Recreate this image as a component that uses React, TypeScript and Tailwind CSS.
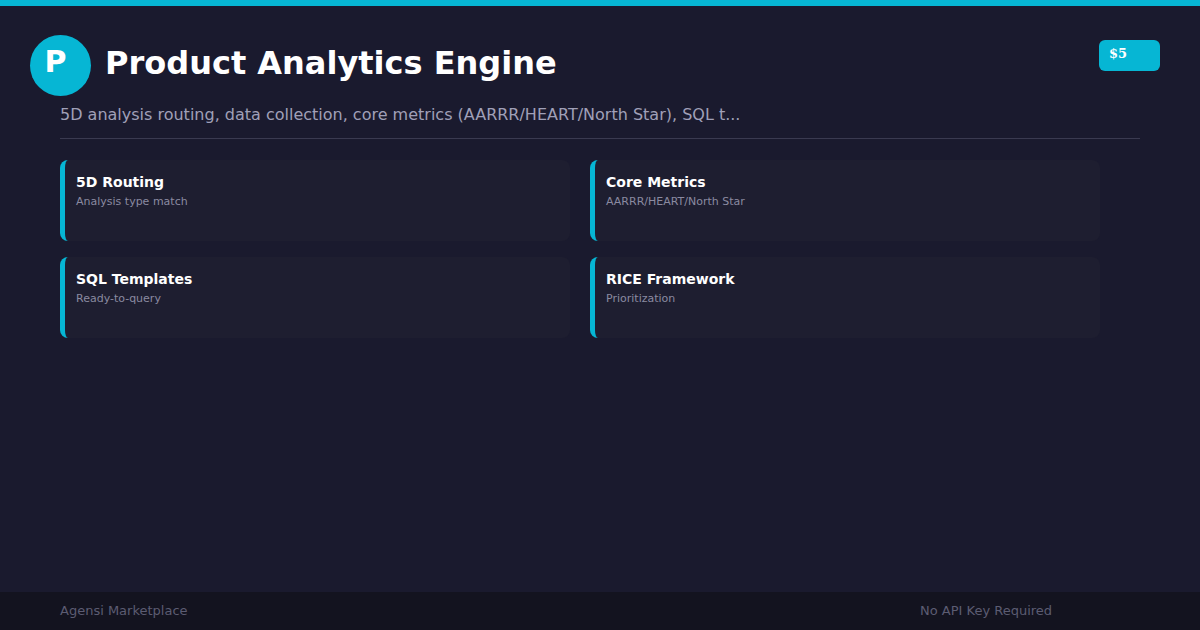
const cards = [
  { title: "5D Routing", sub: "Analysis type match" },
  { title: "Core Metrics", sub: "AARRR/HEART/North Star" },
  { title: "SQL Templates", sub: "Ready-to-query" },
  { title: "RICE Framework", sub: "Prioritization" },
];

export default function App() {
  return (
    <div
      className="w-[1200px] h-[630px] bg-[#1a1a2e] flex flex-col overflow-hidden"
      style={{ fontFamily: '"DejaVu Sans", sans-serif' }}
    >
      <div className="h-[6px] bg-[#06b6d4]" />
      <div className="flex-1 flex flex-col">
        <div className="flex items-start pl-[30px] pt-[29px] pr-[40px]">
          <div className="w-[61px] h-[61px] rounded-full bg-[#06b6d4] flex items-center justify-center text-white text-[30px] font-bold pr-[10px] pb-[8px]">
            P
          </div>
          <div className="ml-[14px] mt-[8px] text-white text-[32px] font-bold leading-[40px]">
            Product Analytics Engine
          </div>
          <div className="ml-auto mt-[5px] w-[61px] h-[31px] rounded-[6px] bg-[#06b6d4] text-white text-[13px] font-bold pl-[10px] pt-[5px] leading-[18px]" style={{ fontFamily: '"DejaVu Serif", serif' }}>
            $5
          </div>
        </div>
        <div className="mx-[60px] mt-[8px] pb-[12px] border-b border-[#3a3a50] text-[#a0a0b8] text-[16px] leading-[22px]">
          5D analysis routing, data collection, core metrics (AARRR/HEART/North Star), SQL t...
        </div>
        <div className="ml-[60px] mt-[21px] grid grid-cols-[510px_510px] gap-x-[20px] gap-y-[16px]">
          {cards.map((c) => (
            <div
              key={c.title}
              className="h-[81px] bg-[#1e1e30] rounded-[8px] border-l-[5px] border-[#06b6d4] pl-[11px] pt-[13px]"
            >
              <div className="text-white text-[14px] font-bold leading-[18px]">{c.title}</div>
              <div className="mt-[4px] text-[#8a8aa0] text-[11px] leading-[14px]">{c.sub}</div>
            </div>
          ))}
        </div>
      </div>
      <div className="h-[38px] bg-[#13131f] flex items-center pl-[60px] text-[13px] text-[#5c5c72]">
        <div className="w-[860px]">Agensi Marketplace</div>
        <div>No API Key Required</div>
      </div>
    </div>
  );
}
